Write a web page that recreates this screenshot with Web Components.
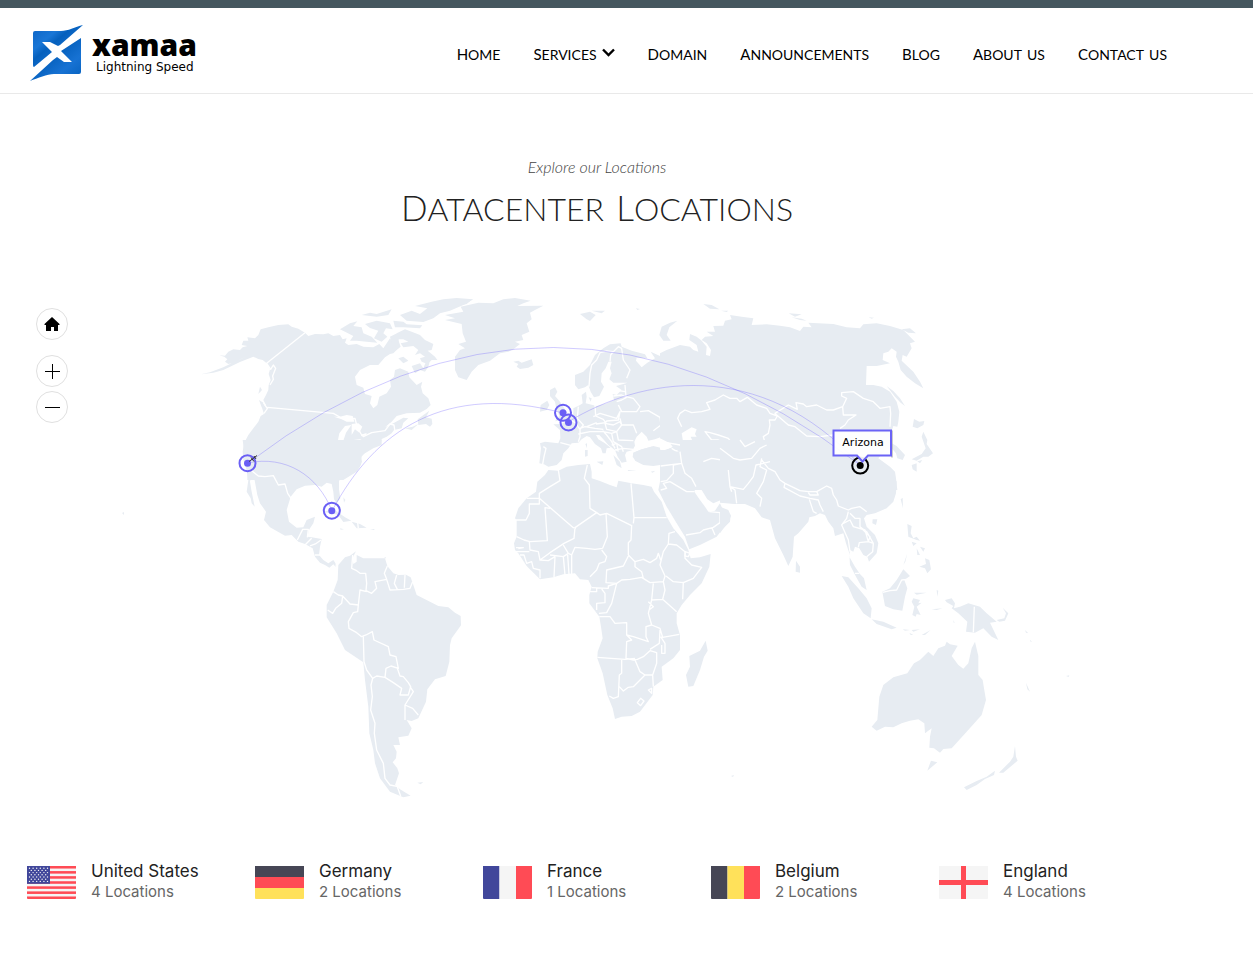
<!DOCTYPE html>
<html lang="en">
<head>
<meta charset="utf-8">
<meta name="viewport" content="width=device-width, initial-scale=1">
<title>Xamaa - Datacenter Locations</title>
<style>
body{margin:0;background:#fff;color:#222;font-family:Inter,"Liberation Sans",sans-serif}
</style>
</head>
<body>
<xa-page></xa-page>

<template id="t-page">
<style>
:host{display:block;--left:27px;--right:86px}
main{display:block;padding:0 var(--right) 0 var(--left)}
.countries{display:grid;grid-template-columns:repeat(5,1fr);margin:40px 0 0;padding:0 0 48px;list-style:none}
</style>
<xa-header></xa-header>
<main>
<xa-heading><span slot="sub">Explore our Locations</span><xa-caps>Datacenter</xa-caps> <xa-caps>Locations</xa-caps></xa-heading>
<xa-map></xa-map>
<ul class="countries">
<li><xa-country flag="us"><span slot="name">United States</span>4 Locations</xa-country></li>
<li><xa-country flag="de"><span slot="name">Germany</span>2 Locations</xa-country></li>
<li><xa-country flag="fr"><span slot="name">France</span>1 Locations</xa-country></li>
<li><xa-country flag="be"><span slot="name">Belgium</span>2 Locations</xa-country></li>
<li><xa-country flag="en"><span slot="name">England</span>4 Locations</xa-country></li>
</ul>
</main>
</template>

<template id="t-caps">
<style>
:host{display:inline-block}
span{display:block;font-variant-caps:small-caps;white-space:nowrap}
span::first-letter{font-size:var(--cap)}
</style>
<span><slot></slot></span>
</template>

<template id="t-header">
<style>
:host{display:block;border-top:8px solid #45575f;border-bottom:1px solid #e9e9e9}
.row{display:flex;align-items:center;justify-content:space-between;height:85px;padding:0 86px 0 30px}
nav{display:flex;gap:33px;padding-top:4px}
xa-logo{padding-top:4px}
</style>
<header class="row">
<xa-logo></xa-logo>
<nav aria-label="Main">
<xa-link>Home</xa-link><xa-link menu>Services</xa-link><xa-link>Domain</xa-link><xa-link>Announcements</xa-link><xa-link>Blog</xa-link><xa-link>About us</xa-link><xa-link>Contact us</xa-link>
</nav>
</header>
</template>

<template id="t-logo">
<style>
:host{display:block}
a{display:flex;align-items:center;gap:8px;color:#000;text-decoration:none}
svg{display:block;width:54px;height:58px}
.name{display:block;font:800 30px/28px "Open Sans","Noto Sans",sans-serif}
.tag{display:block;font:12px/16px "DejaVu Sans",sans-serif;padding-left:4px}
</style>
<a href="#">
<svg viewBox="0 0 54 58" aria-hidden="true">
<defs><linearGradient id="b" x1="0" y1="0" x2="1" y2="1"><stop offset="0" stop-color="#0b63c4"/><stop offset=".3" stop-color="#1976d6"/><stop offset=".42" stop-color="#0560bd"/><stop offset=".7" stop-color="#1772d3"/><stop offset="1" stop-color="#0560bd"/></linearGradient></defs>
<path fill="url(#b)" d="M5 7H31C38 7 45 3 53 1L30 21L28 22L20 18H12L22 28L4 43Q3 43 3 41V9Q3 7 5 7Z"/>
<path fill="url(#b)" d="M51 14V48Q51 50 49 50H24C17 50 8 54 0 57L23 36L27 33L34 38H42L31 27Z"/>
</svg>
<span><span class="name">xamaa</span><span class="tag">Lightning Speed</span></span>
</a>
</template>

<template id="t-link">
<style>
:host{display:block}
a{display:flex;align-items:center;gap:5px;color:#000;text-decoration:none}
xa-caps{font:20px/24px Lato,sans-serif;--cap:15px}
svg{display:none;width:13px;height:9px}
:host([menu]) svg{display:block}
</style>
<a href="#"><xa-caps><slot></slot></xa-caps><svg viewBox="0 0 13 9" aria-hidden="true"><path d="M1 1.5L6.5 7L12 1.5" fill="none" stroke="#000" stroke-width="2.4"/></svg></a>
</template>

<template id="t-heading">
<style>
:host{display:block;padding:60px 0 39px;text-align:center}
p{margin:0;color:#444;font:italic 300 16px/26px Lato,sans-serif}
h1{margin:0;padding:4px 0;color:#222;font:300 45px/40px Lato,sans-serif;--cap:35px}
</style>
<p><slot name="sub"></slot></p>
<h1><slot></slot></h1>
</template>

<template id="t-country">
<style>
:host{display:flex;align-items:center;gap:15px;height:44px}
svg{display:block;flex:none;width:49px;height:33px;padding-top:1px;border-radius:1px}
.name{display:block;margin-top:-2px;font-size:17px;line-height:22px;color:#222}
.count{display:block;font-size:15px;line-height:20px;color:#666}
</style>
<svg viewBox="0 0 49 33" aria-hidden="true"></svg>
<div><span class="name"><slot name="name"></slot></span><span class="count"><slot></slot></span></div>
</template>

<template id="t-map">
<style>
:host{display:block;position:relative}
.map{display:block;width:100%;height:auto}
.controls{position:absolute;left:9px;top:38px;display:grid;gap:4px}
button{display:block;width:32px;height:32px;padding:0;border:1px solid #e0e0e0;border-radius:50%;background:#fff}
button svg{display:block;width:30px;height:30px}
.home{margin-bottom:11px}
.land{fill:#e7ecf2}
.sea{fill:#fff}
.line{fill:none;stroke:#fff;stroke-width:4;stroke-linejoin:round}
.route{fill:none;stroke:#6c5cff;stroke-opacity:.32}
.pin circle:first-child{fill:none;stroke:currentColor;stroke-width:2}
.pin circle:last-child{fill:currentColor}
.pin{color:#6a5ff5}
.pin.on{color:#000}
text{font:11px "DejaVu Sans",sans-serif;fill:#000}
</style>
<svg class="map" viewBox="27 270 1140 550" role="img" aria-label="World map of datacenters">
<g transform="translate(190 290) scale(.33333)">
<!-- North America -->
<g class="land">
<path d="M33 253L60 247 100 232 140 212 175 198 150 208 130 218 115 222 105 215 112 208 103 200 88 196 105 197 115 185 130 178 150 180 158 172 172 168 155 165 160 152 175 152 172 142 195 145 205 135 212 118 235 112 265 105 295 103 305 110 325 116 345 128 355 138 375 132 400 133 415 130 430 138 450 135 458 148 470 145 465 158 475 165 500 162 520 170 550 172 568 162 580 175 590 160 600 145 610 160 625 150 632 170 620 180 610 190 600 192 585 202 565 225 540 225 510 240 495 260 500 285 520 293 525 312 545 318 540 340 550 355 562 345 568 320 590 310 603 290 600 270 612 260 615 240 630 235 655 245 658 262 680 285 697 275 693 290 698 310 715 325 722 345 710 357 690 368 650 370 620 378 605 395 585 412 610 400 640 383 655 385 640 398 635 415 612 420 605 430 590 440 575 447 575 465 550 475 525 490 512 500 516 515 510 530 500 545 460 570H172L172 545 160 510 158 485 162 460 175 435 190 415 205 395 212 378 222 372 215 350 228 345 220 330 228 315 235 300 236 285 242 270 236 252 240 238 230 220 218 210 205 207 190 200 150 216 100 240 70 248Z"/>
<path d="M620 130L645 118 665 125 690 135 705 150 730 162 725 180 713 182 735 200 742 210 725 210 713 222 695 215 690 205 705 200 690 190 675 195 685 180 670 168 640 172 632 160 655 155 640 148 622 148ZM625 205L640 200 655 212 640 220ZM665 228L690 220 700 235 710 210 722 205 715 230 705 245 690 240 675 250ZM450 118L480 100 502 94 490 108 515 112 520 130 545 140 562 158 530 155 500 152 480 152 490 138 465 125ZM515 75L540 68 560 72 605 58 595 75 560 80ZM525 102L560 92 600 100 608 118 588 115 580 130 592 140 575 155 552 145 565 122 540 114ZM610 92L640 95 650 103 697 106 690 115 640 112 615 112ZM630 75L665 62 690 72 712 55 675 48 725 35 760 28 800 24 850 28 820 45 780 62 750 70 730 85 700 96 650 92ZM600 140L630 125 625 155 610 180Z"/>
<path d="M683 388L718 362 708 382 725 386 727 402 720 410 708 402 685 405ZM645 415L668 410 685 402 665 420ZM205 312L210 290 216 300ZM207 330L220 338 228 360 215 352Z"/>
</g>
<g class="sea"><path d="M432 380L450 380 470 375 488 378 493 395 470 395 455 388ZM443 455L448 430 465 408 484 405 468 428 460 452ZM485 402L505 400 517 410 508 428 495 418 485 435ZM478 460L490 450 515 447 495 458ZM512 434L530 429 528 436 515 439Z"/></g>
<path class="line" d="M345 128L230 220 242 238 250 225 257 235 248 258 250 268 240 285M220 338L232 356 222 370M232 352L430 370 460 387 495 385 500 405 512 430 520 440 545 428 585 422 600 402 612 405 615 425"/>
<!-- Central and South America -->
<g transform="translate(0 450)">
<g class="land">
<path d="M158 0H575L570 12 545 20 525 35 515 50 512 75 490 90 465 108 447 122 447 148 451 175 440 190 432 178 430 155 425 132 410 128 395 140 375 135 345 137 320 148 302 170 290 210 297 245 320 263 340 262 350 240 375 230 370 250 358 268 352 290 365 292 395 297 390 320 387 345 400 360 415 370 430 360 440 375 438 382 430 373 418 383 405 375 390 368 375 350 368 325 345 312 325 305 305 285 285 287 240 262 222 240 228 215 210 190 202 165 192 110 183 108 180 125 184 150 188 170 194 200 185 190 182 175 170 155 175 120 170 92Z"/>
<path d="M398 217L430 207 465 232 484 242 460 246 445 225 420 218ZM485 245L510 252 530 263 500 265ZM450 265L462 268 452 269ZM540 267L554 267 552 270ZM460 172L466 180 462 188ZM583 352L588 352 586 356Z"/>
<path d="M445 375L465 352 480 347 498 334 487 355 490 372 500 365 500 345 520 355 555 355 585 355 592 378 610 400 625 405 648 404 662 412 670 435 680 465 720 485 745 498 775 502 795 518 812 528 813 556 785 595 780 615 778 665 767 708 735 718 712 748 708 785 685 835 665 843 650 840 665 865 655 887 625 892 630 915 610 915 620 935 618 955 608 967 622 985 627 1000 615 1035 630 1048 662 1067 640 1072 600 1055 570 1015 555 970 550 930 538 880 535 800 525 720 520 667 465 630 440 580 410 532 410 495 430 455 443 420ZM682 1028L700 1026 692 1033Z"/>
</g>
<path class="line" d="M185 92L205 108 225 110 250 107 265 135 285 132 293 160 305 178M322 300L338 268 355 268 352 292M345 315L365 295M360 318L376 312 393 300M375 345L390 345M440 355L438 385M503 248L505 265M488 345L485 385 500 392 510 400 527 400 530 430 528 452 545 460 560 445 555 425 590 418 583 400 592 378M590 418L600 450 640 448 660 445 668 425M620 405L613 430 622 448M645 405L643 443M430 455L445 465 458 468 480 492 505 495 503 515 490 518 475 545 477 565 500 578 515 590 528 585 547 575 552 600 595 620 600 645 618 650 625 685 603 678 588 685 585 712 610 728 635 745 630 765 655 765 662 740 655 728 640 710 630 708 622 685M505 495L510 450 530 455M413 510L428 520 437 505 455 490 458 468M520 590L522 665 530 690 548 715 543 735 547 770 542 810 555 850 553 880 560 930 580 970 585 1015 600 1035 625 1040M548 715L560 708 585 712M660 740L670 755 645 795 645 840M645 795L668 805 685 825M622 1040L632 1068"/>
</g>
<!-- Greenland and Europe -->
<g transform="translate(750 0)">
<g class="land">
<path d="M0 62L0 32 40 27 97 28 80 42 40 52ZM15 75L70 65 62 50 115 38 160 40 190 28 225 24 272 32 250 40 232 48 310 47 285 60 270 68 275 88 260 100 268 125 245 135 250 150 225 155 240 162 220 178 205 185 180 190 150 212 115 225 95 245 80 270 55 262 45 240 45 200 60 180 75 175 55 162 78 155 68 130 65 102 15 90 45 85Z"/>
<path d="M220 215L235 212 245 218 275 208 280 225 265 233 240 237 230 230 235 222ZM420 72L450 65 467 75 450 93 440 88ZM455 62L495 62 485 70ZM588 55L600 57 592 60ZM712 92L690 98 665 110 658 135 670 152 692 152 680 135 688 112ZM330 300L345 292 352 305 345 318 360 335 370 350 382 370 395 378 375 388 345 394 358 378 348 352 345 335 330 318ZM302 345L322 332 328 345 320 360 300 365Z"/>
<path d="M405 270L405 255 430 245 450 225 465 195 490 175 510 163 542 160 545 170 575 182 615 193 622 205 590 203 588 212 605 232 622 218 645 205 632 185 665 200 690 185 720 180V475L700 470 670 450 665 440 645 448 625 452 620 440 605 425 590 440 583 455 585 467 578 480 560 485 555 495 560 515 545 518 533 500 525 480 505 465 490 448 478 435 468 435 475 448 495 460 512 473 500 475 497 490 488 490 483 475 465 462 450 442 440 438 425 448 415 458 395 460 385 475 370 490 365 510 350 525 325 530 312 523 298 520 303 475 300 460 315 455 355 460 361 445 360 420 340 403 365 402 375 395 390 385 400 370 400 355 420 345 428 340 425 315 438 305 440 320 437 340 470 348 500 340 522 330 518 312 530 315 545 300 528 288 550 282 562 278 520 278 508 268 515 250 510 235 515 215 505 215 497 235 485 250 483 275 492 290 478 318 462 322 452 305 445 285 435 292 415 298 405 285Z"/>
<path d="M580 488L600 480 640 468 680 478 720 480V520L690 520 660 520 640 525 605 520 585 510 578 500ZM470 515L490 514 487 525ZM435 480L443 480 443 498 435 500ZM436 462L441 460 441 475ZM563 540L590 542 565 543ZM632 545L646 542 638 548ZM446 322L455 325 452 335ZM520 495L540 515 545 535 530 525Z"/>
</g>
<path class="line" d="M447 290L450 250 455 225 470 210 480 188 500 183 520 185 535 170 545 175 550 210 570 240 560 265M510 215L512 195 520 185M520 318L545 315 560 322M525 300L555 305M555 285L558 320 580 325 600 350 590 365 545 365 535 345M530 335L545 330 560 322M465 345L467 378 490 388 497 398 468 402M415 350L412 385 430 405 420 418M460 380L480 370 530 385 540 365 535 390 500 393 495 400 520 405 540 395 545 405 580 405 590 430M600 365L625 362 660 382 663 405 640 422M540 385L545 405 530 425 500 418 495 400M420 415L435 410 465 415 490 418M440 410L470 398M415 455L420 440 420 418 405 398 385 385M415 432L450 425 475 425 490 425M488 422L500 435 515 455 525 475M490 425L515 430 520 455 545 470 550 485M515 430L530 425 535 450 580 452M515 465L530 460 535 485M525 480L550 475 580 478M361 458L395 467M310 470L318 475 312 500 308 523"/>
</g>
<!-- Northern Asia -->
<g transform="translate(1410 0)">
<g class="land">
<path d="M0 190L20 180 60 165 90 170 100 180 115 185 110 165 88 150 90 132 110 140 125 152 140 170 138 195 150 198 153 180 140 160 125 150 135 140 160 138 140 125 165 125 160 108 190 107 195 92 215 88 210 75 245 80 280 85 275 105 320 103 360 107 390 112 420 123 430 110 455 112 445 98 520 102 560 112 600 115 610 103 650 100 690 108 730 120 765 155 750 160 755 175 740 200 728 195 725 212 760 245 780 275 790 295 765 280 740 260 722 240 715 215 708 200 710 185 695 175 685 185 670 190 668 210 690 220 650 228 620 228 618 285 640 285 665 290 690 305 710 335 718 365 715 395 712 410 700 408 690 440 695 460 710 468 735 495 728 510 712 505 708 490 695 475 675 480 655 505 690 530 705 545 708 565 712 600H0V478L20 478 36 472 20 458 0 450Z"/>
<path d="M725 118L750 115 768 130 745 128ZM680 288L700 303 720 325 735 348 722 338 705 320ZM762 387L778 395 793 393 790 405 772 415 758 410ZM790 425L802 450 800 462 819 490 805 500 790 500 770 512 755 508 785 492 797 475 785 440ZM755 525L770 520 770 545 758 538ZM772 514L787 510 780 520ZM130 42L155 45 178 58 150 56ZM183 62L205 62 200 66ZM386 70L425 73 405 80ZM395 82L420 90 440 92 425 86ZM626 82L642 83 635 86Z"/>
</g>
<path class="sea" d="M65 430L95 412 110 418 105 432 110 440 92 440 100 458 118 465 108 480 130 497 140 515 120 520 98 515 85 490 70 460ZM0 445L30 460 38 470 15 480 0 480Z"/>
<path class="line" d="M65 410L53 385 60 370 75 360 95 368 125 365 150 358 140 338 165 330 190 315 210 325 230 325 240 335 262 322 290 345 320 355 330 370 352 378 345 390 328 390 330 405 325 430 310 440 315 458 270 455 258 465 240 480 210 490 200 460 175 450 155 450 135 425 150 428 175 435 205 445 220 465 250 465M240 480L270 470 285 480 300 475 325 455M250 490L280 495 285 480M352 378L345 370 385 345 412 358 408 338 430 342 440 350 470 345 500 360 520 360 548 350 560 325 545 318 545 308 580 305 610 325 640 335 660 355 690 350 692 370 690 410M350 375L385 405 405 410 440 438 480 440 520 435M548 350L550 375 588 375 565 390 555 405 540 415M130 515L170 508 205 530 205 560 215 575 215 600M205 530L240 510 250 500 280 515 270 540 255 570 240 590 215 600M20 458L60 465 70 480M35 475L60 490 80 490 75 500M50 480L55 500 65 510M0 515L35 515 50 545 65 570 75 600M60 485L90 515"/>
</g>
<!-- Africa and the Middle East -->
<g transform="translate(930 450)">
<g class="land">
<path d="M145 90L175 92 200 80 235 75 270 72 275 95 275 115 300 123 330 135 350 142 355 122 395 130 430 135 455 140 462 155 485 185 500 230 520 265 550 300 565 330 572 355 600 352 632 342 628 380 605 430 570 465 545 495 530 520 530 550 540 585 540 630 520 655 485 680 488 720 460 740 458 765 420 815 395 828 365 830 345 837 338 805 322 765 308 700 292 655 293 635 308 595 303 560 298 530 268 490 268 465 275 440 265 420 240 418 225 400 190 403 160 412 120 418 80 378 55 340 45 330 42 310 50 290 50 240 45 235 55 205 80 175 108 155 112 125 135 105Z"/>
<path d="M617 602L623 632 612 650 600 690 580 738 565 740 558 705 570 680 568 648 600 632Z"/>
<path d="M480 78L480 34 540 35 540 0H750V190L710 192 680 188 663 180 640 190 622 178 605 150 588 140 583 155 600 180 615 200 625 215 645 212 660 190 668 208 692 225 690 245 665 270 650 290 600 315 568 328 555 290 530 250 500 200 485 170 475 150 482 115ZM400 38L425 28 455 20 490 32 540 35V75H480L460 78 430 75 405 62Z"/>
</g>
<path class="line" d="M175 90L180 122 150 140 118 160 118 192 88 192 88 220 78 240 48 240M80 175L118 175 220 263 228 265M118 190L118 175M150 205L135 203 142 302 90 305 72 300 50 290M225 263L290 218 270 205 268 135 253 115 262 75M290 218L300 225 320 220 395 257M318 220L322 290 308 325M395 255L393 300 385 308 385 345M393 130L402 233 500 233M400 250L402 233M225 263L222 295 192 310 150 338 120 360M385 345L405 365 430 358 450 368 470 355 475 340 482 360M385 348L370 378 320 390 318 428 350 430 365 420 390 418 425 412 450 428 490 425 495 408 480 375 490 335 505 312 530 315 555 335 555 355 575 375 605 382 580 415 550 428 520 425 498 408M405 365L405 380 425 395 430 415M505 312L507 280 525 275M550 425L548 478M490 425L495 450 488 478 530 515M488 478L455 480 460 430M455 480L445 520 455 555 480 565 488 592 538 583M445 485L460 500 447 510M480 570L478 610 450 628M482 590L495 610 495 640 485 640 485 615M455 555L438 560 438 590 445 605 425 598 400 590 380 585 380 548 345 550 330 530 298 530M380 585L395 600 380 605 378 655 400 660 412 658 430 650 450 632 470 638 470 670 458 705 460 740M292 652L375 658 405 655M365 660L365 700 358 705 355 770 340 775 328 768M358 740L370 753 385 742 400 740 435 705 420 695 405 660M435 705L458 705M297 520L320 518 335 490 350 430 325 438 325 445 275 443M305 447L315 460 315 488 290 490 290 510M270 455L290 455 290 445M308 325L285 328 260 325 225 322 215 345 215 402M305 330L320 350 315 365 298 370 290 390 270 410M165 350L162 412M190 350L195 405M203 345L207 402M150 345L190 350 205 340 215 345M205 340L190 315M88 305L90 330 115 335 120 360 145 362 165 350M48 335L88 335M48 323L70 323 55 326M60 345L72 345 80 370 95 365 100 385 120 390 120 415M482 125L500 122 520 100 520 75 545 70 540 35M482 78L545 70 555 100 575 115 588 140M510 125L560 155 583 155M482 150L500 145 490 130 510 125M558 285L600 278 610 270 640 262 660 248 660 218 628 215M635 262L645 285M610 65L635 55 665 60 685 75 680 95 690 125 695 148 715 155 710 190M695 145L730 140 750 125"/>
<path class="line" d="M412 788L422 775 432 783 422 797ZM445 750L455 745 455 760ZM556 335L570 340 565 350 555 348Z"/>
</g>
<!-- South and South-East Asia -->
<g transform="translate(1590 450)">
<g class="land">
<path d="M0 0H440L470 50 490 80 515 103 530 125 528 160 520 185 500 205 465 220 440 225 432 235 440 260 465 285 475 310 470 340 447 365 442 350 430 345 418 325 405 320 400 335 390 330 388 350 405 380 420 402 432 415 440 450 425 440 408 410 390 375 388 340 378 310 370 280 345 288 340 265 325 245 315 225 300 220 285 228 268 232 265 245 235 280 222 290 218 350 205 378 190 345 165 295 150 240 125 232 105 205 75 192 45 192 0 188ZM0 200L25 210 33 228 25 245 0 280Z"/>
<path d="M228 362L240 380 240 398 227 395ZM458 238L472 238 468 255 457 250ZM542 178L548 173 549 205ZM562 252L575 258 572 280 580 295 590 290 600 302 590 300 565 290ZM598 380L618 372 615 355 628 360 633 388 622 400 615 385ZM600 320L615 325 610 335ZM590 325L600 345 592 345ZM562 340L556 365 550 375ZM575 305L590 310 580 318ZM365 408L385 412 415 445 440 475 455 505 452 535 430 520 400 475 385 440ZM455 538L490 545 530 563 515 568 470 552ZM487 455L510 445 530 420 550 388 570 408 553 420 562 445 555 470 547 512 520 508 495 498ZM580 475L600 480 595 490 605 488 590 500 602 525 590 522 587 530 577 525 583 500 575 485ZM582 458L620 458 590 464ZM548 568L570 570 555 572ZM605 585L632 570 615 585ZM575 570L600 568 580 575ZM568 578L580 585 572 585ZM635 508L668 505 650 510ZM650 450L655 452 652 470ZM675 480L695 475 705 490 702 505 720 500 745 490 780 500 800 520 830 545 810 548 835 600 815 590 790 565 765 578 738 575 742 545 715 520 695 505 700 498 680 487ZM830 540L853 535 858 520 848 503 865 520 855 542 838 545ZM885 540L892 545ZM915 570L925 580 918 578ZM930 600L937 606 930 604Z"/>
</g>
<path class="line" d="M0 25L40 55 60 60 95 55 120 25 140 15M60 0L75 20 105 5M25 90L30 140 45 150 50 190M30 140L70 148 85 130 100 110 108 75 130 70 150 65M35 155L30 140M125 55L120 80 140 90 130 125 110 160 125 175 120 200M125 60L145 85 165 95 180 120 195 130 240 152 265 155 290 155 295 165 270 165 265 158M195 130L192 142 240 168 270 175 295 180 300 195 310 215M268 178L280 215 290 220M290 155L320 138 335 145 340 165 350 180 355 198 385 210 395 205 420 200 440 215M385 215L380 235 365 255 385 300 390 335M390 220L405 235 420 235 420 260 450 290 445 305 418 308 415 322M445 305L460 310 458 335 440 350M370 250L390 240 400 260 435 270 445 305M420 260L440 275 460 310M488 457L510 452 530 450 545 420 560 418M763 500L760 577M405 400L418 400"/>
</g>
<!-- Oceania -->
<g class="land" transform="translate(1920 930)">
<path d="M350 125L360 133 383 137 365 168 385 195 400 206 415 190 425 145 435 125 445 168 445 225 458 240 462 265 468 300 455 345 410 395 365 445 340 447 330 458 312 445 298 443 300 410 305 385 285 400 283 370 265 358 240 362 215 370 190 382 165 380 140 392 125 380 142 360 148 290 160 255 190 232 232 220 252 190 270 180 295 155 310 168 325 145 345 137Z"/>
<path d="M303 482L322 487 292 512ZM555 438L558 470 563 482 520 518 507 518 540 485 550 470ZM495 512L492 525 465 537 440 555 410 570 402 562 440 543 470 530ZM588 248L600 275 592 268ZM708 228L718 226 716 231ZM728 213L738 210ZM631 184L633 190ZM370 60L374 68 371 68Z"/>
</g>
</g>
<path class="land" d="M122 513L124 512 124 515ZM731 776L734 775 733 777Z"/>
<g class="route">
<path d="M248 463Q553 231 860 465"/>
<path d="M332 511C375 430 445 382 563 413"/>
<path d="M568 422C640 378 760 355 860 465"/>
<path d="M248 463C285 455 318 475 332 511"/>
</g>
<g class="pin"><circle cx="247.5" cy="463.2" r="8"/><circle cx="247.5" cy="463.2" r="3.5"/></g>
<path d="M249 461.5L257 455.5M251 457.5L254 461.5M254 456L256 459" stroke="#333" stroke-width="1" fill="none"/>
<g class="pin"><circle cx="331.8" cy="510.7" r="8"/><circle cx="331.8" cy="510.7" r="3.5"/></g>
<g class="pin"><circle cx="563" cy="412.8" r="8"/><circle cx="563" cy="412.8" r="3.5"/></g>
<g class="pin"><circle cx="568.5" cy="422.5" r="8"/><circle cx="568.5" cy="422.5" r="3.5"/></g>
<g class="pin on"><circle cx="860.2" cy="465.6" r="8"/><circle cx="860.2" cy="465.6" r="3.5"/></g>
<path d="M834.5 431.5H892V457.5" fill="none" stroke="#999" stroke-width="2" opacity=".5"/>
<path d="M833.5 430.5H891V455.5H868L862.5 461.5L857 455.5H833.5Z" fill="#fff" fill-opacity=".93" stroke="#6b63f6" stroke-width="2"/>
<text x="863" y="446" text-anchor="middle">Arizona</text>
</svg>
<div class="controls">
<button class="home" type="button" aria-label="Home"><svg viewBox="0 0 30 30"><path d="M15 8L22.5 15V16H21V22H17V18H14V22H9V16H7.500V15Z"/></svg></button>
<button type="button" aria-label="Zoom in"><svg viewBox="0 0 30 30"><path d="M8 15.500H23M15.500 8V23" stroke="#000"/></svg></button>
<button type="button" aria-label="Zoom out"><svg viewBox="0 0 30 30"><path d="M8 15.500H23" stroke="#000"/></svg></button>
</div>
</template>

<script>
class Piece extends HTMLElement {
  constructor() {
    super();
    const id = 't-' + this.localName.slice(3);
    this.attachShadow({ mode: 'open' }).append(document.getElementById(id).content.cloneNode(true));
  }
}
for (const name of ['caps', 'logo', 'link', 'heading', 'map', 'header']) {
  customElements.define('xa-' + name, class extends Piece {});
}

const rect = (x, y, w, h, fill) => `<rect x="${x}" y="${y}" width="${w}" height="${h}" fill="${fill}"/>`;
const dark = '#464655', red = '#ff4b55', yellow = '#ffe15a', blue = '#41479b', pale = '#f5f5f5';
const flags = {
  us() {
    let s = rect(0, 0, 49, 33, pale);
    for (let i = 0; i < 7; i++) s += rect(0, i * 5.08, 49, 2.54, red);
    s += rect(0, 0, 23, 17.8, blue);
    for (let r = 0; r < 7; r++)
      for (let c = 0; c < 6 - r % 2; c++)
        s += `<circle cx="${2.5 + c * 3.6 + r % 2 * 1.8}" cy="${2.2 + r * 2.2}" r=".7" fill="${pale}"/>`;
    return s;
  },
  de: () => rect(0, 0, 49, 11, dark) + rect(0, 11, 49, 11, red) + rect(0, 22, 49, 11, yellow),
  fr: () => rect(0, 0, 16.5, 33, blue) + rect(16.5, 0, 16.5, 33, pale) + rect(33, 0, 16, 33, red),
  be: () => rect(0, 0, 16.5, 33, dark) + rect(16.5, 0, 16.5, 33, yellow) + rect(33, 0, 16, 33, red),
  en: () => rect(0, 0, 49, 33, pale) + rect(22, 0, 5, 33, red) + rect(0, 14, 49, 5, red)
};
customElements.define('xa-country', class extends Piece {
  connectedCallback() {
    this.shadowRoot.querySelector('svg').innerHTML = flags[this.getAttribute('flag')]();
  }
});
customElements.define('xa-page', class extends Piece {});
</script>
</body>
</html>
